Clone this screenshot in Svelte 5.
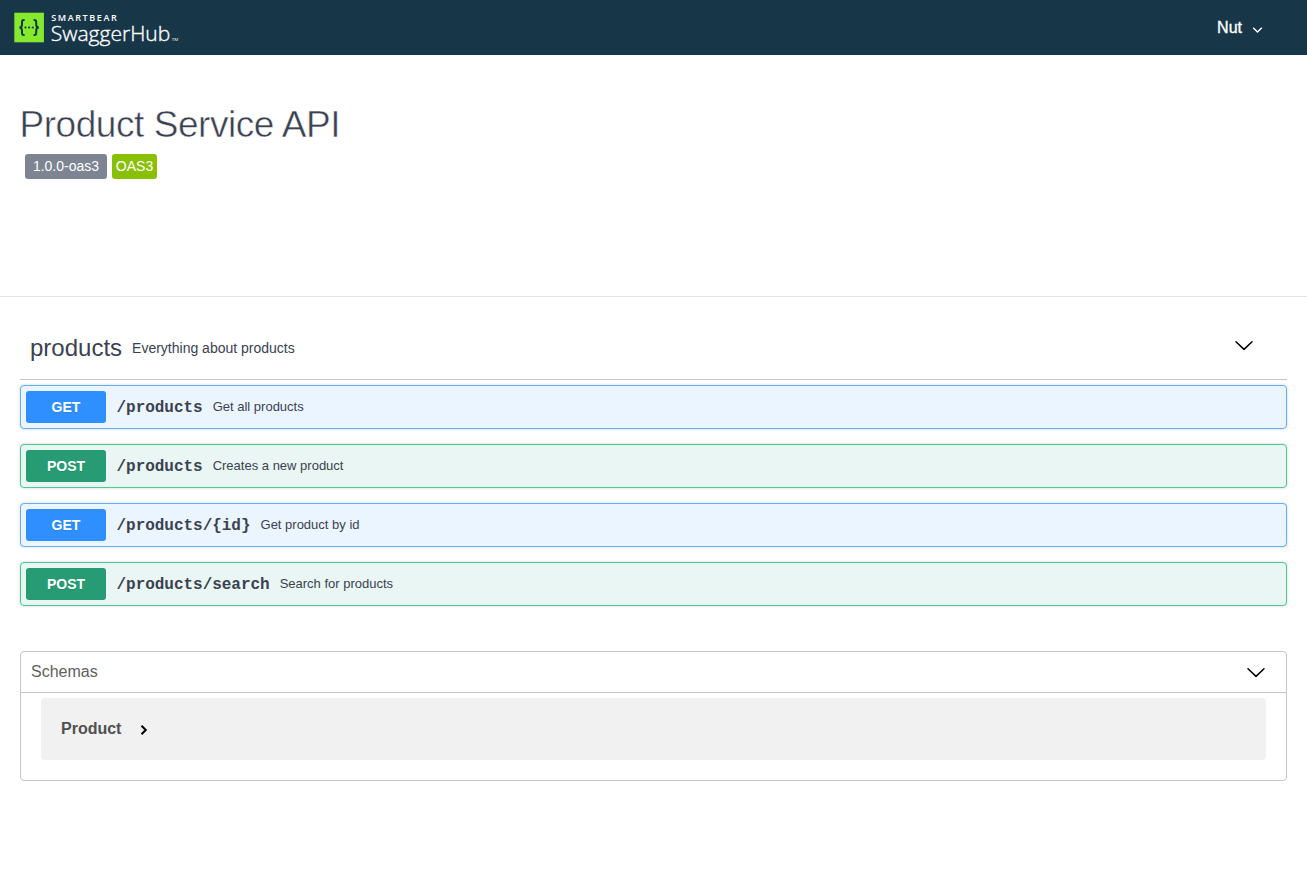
<script>
  const operations = [
    { method: 'GET', path: '/products', summary: 'Get all products' },
    { method: 'POST', path: '/products', summary: 'Creates a new product' },
    { method: 'GET', path: '/products/{id}', summary: 'Get product by id' },
    { method: 'POST', path: '/products/search', summary: 'Search for products' }
  ];
</script>

{#snippet chevron()}
  <svg class="chevron" width="20" height="12" viewBox="0 0 20 12" fill="none" stroke="#000" stroke-width="1.5" stroke-linecap="round" stroke-linejoin="round">
    <path d="M2 2.8 10 10.4 18 2.8" />
  </svg>
{/snippet}

<header class="topbar">
  <svg class="logo" width="180" height="55" viewBox="0 0 180 55">
    <rect x="14.3" y="12.7" width="29.6" height="29.6" fill="#85ea2d" />
    <g fill="none" stroke="#173647" stroke-width="2">
      <path d="M24.6 20.1C22.4 19.8 21.9 20.8 22 22.4V24.4C22 26.4 21.2 27.4 19.4 27.5 21.2 27.6 22 28.6 22 30.6V32.6C21.9 34.2 22.4 35.2 24.6 34.9" />
      <path d="M33.6 20.1C35.8 19.8 36.3 20.8 36.2 22.4V24.4C36.2 26.4 37 27.4 38.8 27.5 37 27.6 36.2 28.6 36.2 30.6V32.6C36.3 34.2 35.8 35.2 33.6 34.9" />
    </g>
    <g fill="#173647">
      <circle cx="25.4" cy="27.5" r="1.1" />
      <circle cx="29.1" cy="27.5" r="1.1" />
      <circle cx="32.8" cy="27.5" r="1.1" />
    </g>
    <g fill="#fff" font-family="'Open Sans', sans-serif">
      <text x="51.2" y="20.9" font-size="9" font-weight="600" textLength="65.5">SMARTBEAR</text>
      <text x="50.8" y="41" font-size="21" font-weight="300" stroke="#fff" stroke-width=".35" textLength="119.5" lengthAdjust="spacingAndGlyphs">SwaggerHub</text>
      <text x="171.7" y="40.7" font-size="4" textLength="6.5" lengthAdjust="spacingAndGlyphs">TM</text>
    </g>
  </svg>
  <div class="user">
    <span>Nut</span>
    <svg width="11" height="8" viewBox="0 0 11 8" fill="none" stroke="#fff" stroke-width="1.4"><path d="M1.2 1.7 5.5 6 9.8 1.7" /></svg>
  </div>
</header>

<section class="info">
  <h1>Product Service API</h1>
  <div class="badges"><span class="version">1.0.0-oas3</span><span class="oas">OAS3</span></div>
</section>

<main>
  <div class="tag">
    <h2>products</h2>
    <span class="desc">Everything about products</span>
    {@render chevron()}
  </div>
  <div class="ops">
    {#each operations as op}
      <div class="op {op.method.toLowerCase()}">
        <span class="method">{op.method}</span>
        <span class="path">{op.path}</span>
        <span class="summary">{op.summary}</span>
      </div>
    {/each}
  </div>
  <section class="schemas">
    <div class="shead"><span>Schemas</span>{@render chevron()}</div>
    <div class="model">
      <span>Product</span>
      <svg width="8" height="12" viewBox="0 0 8 12" fill="none" stroke="#000" stroke-width="2"><path d="M1.5 1.7 5.8 6 1.5 10.3" /></svg>
    </div>
  </section>
</main>

<style>
  :global(body) {
    background: #fff;
    color: #3b4151;
    font-family: 'Liberation Sans', Arial, sans-serif;
  }
  .topbar {
    height: 55px;
    background: #173647;
    display: flex;
    justify-content: space-between;
  }
  .logo { display: block; }
  .user {
    display: flex;
    align-items: center;
    gap: 10px;
    height: 55px;
    padding-right: 44px;
    color: #fff;
    font-size: 16px;
    -webkit-text-stroke: 0.35px #fff;
  }
  .user span { line-height: 20px; }
  .user svg { margin-top: 5px; }
  .info {
    height: 242px;
    box-sizing: border-box;
    padding: 48px 20px 0;
    border-bottom: 1px solid #e4e4e6;
  }
  h1 {
    margin: 0 0 0 -0.5px;
    font-size: 37px;
    font-weight: 400;
    line-height: 44px;
    letter-spacing: -0.45px;
    -webkit-text-stroke: 0.5px #fff;
  }
  .badges {
    display: flex;
    gap: 5px;
    padding: 7px 5px 0;
    font-size: 14px;
    line-height: 25px;
    color: #fff;
  }
  .badges span {
    height: 25px;
    border-radius: 3px;
    text-align: center;
    white-space: nowrap;
  }
  .version { width: 82px; background: #7d8492; }
  .oas { width: 45px; background: #89bf04; }
  main { padding: 19px 20px 0; }
  .tag {
    display: flex;
    align-items: center;
    height: 63px;
    padding: 0 33px 0 10px;
    border-bottom: 1px solid #c4c6ca;
  }
  h2 {
    margin: 0;
    font-size: 24px;
    font-weight: 400;
    line-height: 28px;
  }
  .desc { margin-left: 10px; font-size: 14px; }
  .chevron { margin-left: auto; }
  .tag .chevron { margin-top: -5px; }
  .ops {
    display: flex;
    flex-direction: column;
    gap: 15px;
    padding-top: 5px;
  }
  .op {
    display: flex;
    align-items: center;
    height: 44px;
    box-sizing: border-box;
    padding: 0 5px;
    border: 1px solid #61affe;
    border-radius: 4px;
    background: #ebf5ff;
    box-shadow: 0 0 3px rgba(0, 0, 0, 0.19);
  }
  .post { border-color: #49cc90; background: #e9f6f3; }
  .method {
    width: 80px;
    height: 32px;
    border-radius: 3px;
    background: #2f8fff;
    color: #fff;
    font-size: 14px;
    font-weight: 700;
    line-height: 32px;
    text-align: center;
    text-shadow: 0 1px 0 rgba(0, 0, 0, 0.1);
  }
  .post .method { background: #279c74; }
  .path {
    margin-left: 10.5px;
    padding-top: 2px;
    font: 700 16px/20px 'Courier', 'Liberation Mono', monospace;
    letter-spacing: -0.03px;
  }
  .summary { margin-left: 10px; padding-bottom: 2px; font-size: 13px; }
  .schemas {
    height: 130px;
    margin-top: 45px;
    box-sizing: border-box;
    border: 1px solid #c4c4ca;
    border-radius: 4px;
  }
  .shead {
    display: flex;
    align-items: center;
    height: 40px;
    padding: 0 20px 0 10px;
    border-bottom: 1px solid #c4c4ca;
    color: #606060;
    font-size: 16px;
  }
  .model {
    display: flex;
    align-items: center;
    gap: 19px;
    height: 62px;
    box-sizing: border-box;
    margin: 5px 20px;
    padding-left: 20px;
    border-radius: 4px;
    background: #f1f1f1;
    color: #505050;
    font-size: 16px;
    font-weight: 700;
  }
  .model svg { margin-top: 2px; }
</style>
